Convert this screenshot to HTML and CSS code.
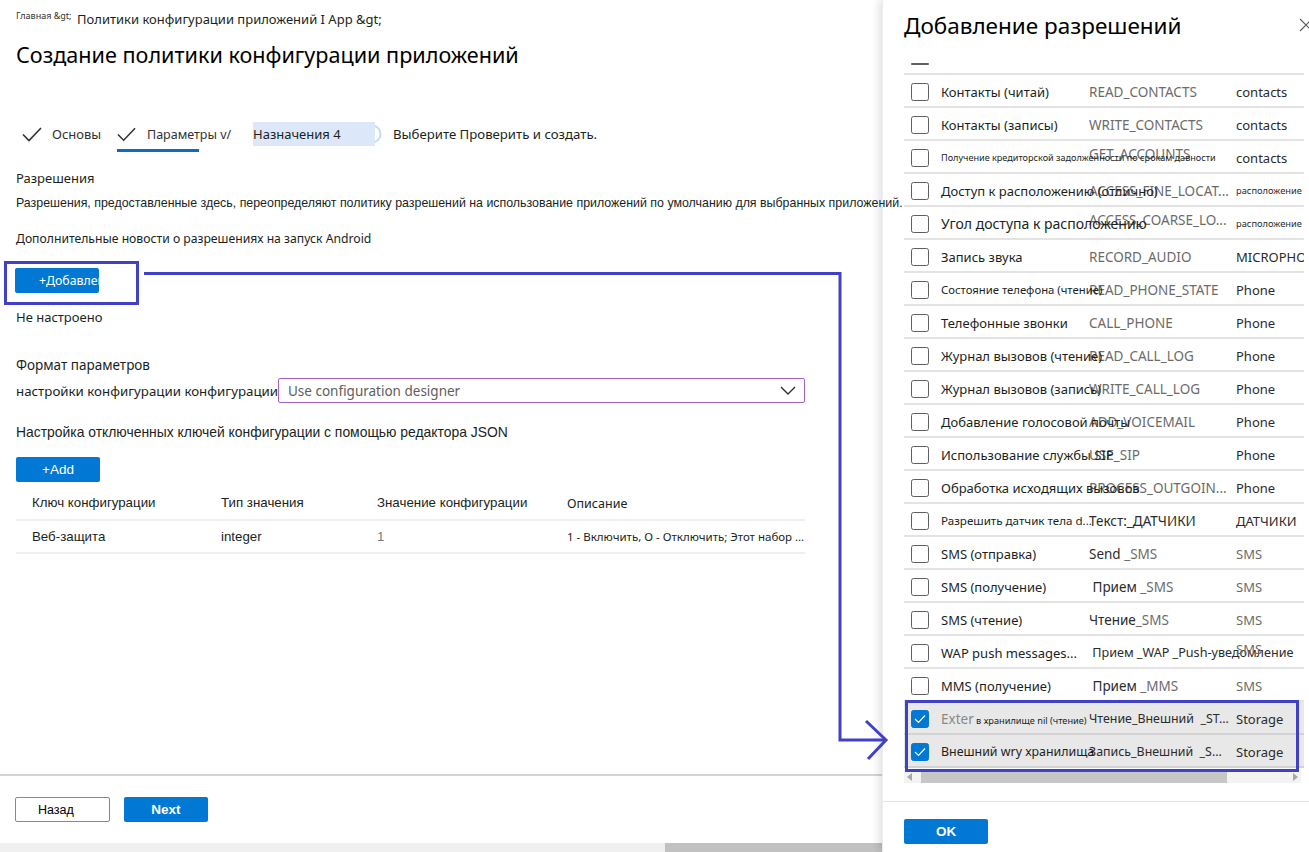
FILE: index.html
```html
<!DOCTYPE html>
<html lang="ru">
<head>
<meta charset="utf-8">
<title>Создание политики конфигурации приложений</title>
<link rel="stylesheet" href="styles.css">
</head>
<body>
<div class="main">
  <div class="crumbs"><span class="crumb-home">Главная &amp;gt;</span><span class="crumb">Политики конфигурации приложений I App &amp;gt;</span></div>
  <h1 class="title">Создание политики конфигурации приложений</h1>
  <nav class="steps">
    <div class="step step-1"><svg class="check" viewBox="0 0 20 15" width="20" height="15"><polyline points="1,7.5 7,13.5 19,1"/></svg><span>Основы</span></div>
    <div class="step step-2"><svg class="check" viewBox="0 0 20 15" width="19" height="15"><polyline points="1,7.5 7,13.5 19,1"/></svg><span>Параметры v/</span></div>
    <div class="step step-3"><svg class="ring" viewBox="0 0 20 20" width="20" height="20"><circle cx="10" cy="10" r="8.5"/></svg><span class="step-hl">Назначения 4</span></div>
    <div class="step step-4">Выберите Проверить и создать.</div>
  </nav>

  <div class="perm-title">Разрешения</div>
  <div class="desc">Разрешения, предоставленные здесь, переопределяют политику разрешений на использование приложений по умолчанию для выбранных приложений.</div>
  <div class="extra">Дополнительные новости о разрешениях на запуск Android</div>
  <button class="btn btn-primary btn-perm">+Добавление</button>
  <div class="not-config">Не настроено</div>
  <div class="format">Формат параметров</div>
  <div class="config-row">
    <span class="config-label">настройки конфигурации конфигурации</span>
    <div class="select"><span>Use configuration designer</span><svg class="chev" viewBox="0 0 16 9" width="16" height="9"><polyline points="1,1 8,8 15,1"/></svg></div>
  </div>
  <div class="json-label">Настройка отключенных ключей конфигурации с помощью редактора JSON</div>
  <button class="btn btn-primary btn-add">+Add</button>
  <div class="cfg-table">
    <div class="cfg-head">
      <span class="c1">Ключ конфигурации</span><span>Тип значения</span><span>Значение конфигурации</span><span class="c4h">Описание</span>
    </div>
    <div class="cfg-row">
      <span class="c1">Веб-защита</span><span>integer</span><span class="muted">1</span><span class="c4">1 - Включить, О - Отключить; Этот набор параметров</span>
    </div>
  </div>
</div>

<footer class="footer">
  <button class="btn btn-back">Назад</button>
  <button class="btn btn-primary btn-next">Next</button>
</footer>
<div class="page-scroll"><span class="ps-track"></span><span class="ps-thumb"></span></div>

<aside class="panel">
  <div class="panel-head">
    <h2 class="panel-title">Добавление разрешений</h2>
    <svg class="close" viewBox="0 0 14 14" width="14" height="14"><path d="M1 1 L13 13 M13 1 L1 13"/></svg>
  </div>
  <div class="perm-list">
    <div class="stub"><span class="stub-dash"></span></div>
    <div class="prow"><span class="cb"></span><span class="pname">Контакты (читай)</span><span class="pcode">READ_CONTACTS</span><span class="pgroup">contacts</span></div>
    <div class="prow"><span class="cb"></span><span class="pname">Контакты (записы)</span><span class="pcode">WRITE_CONTACTS</span><span class="pgroup">contacts</span></div>
    <div class="prow"><span class="cb"></span><span class="pname xs">Получение кредиторской задолженности по срокам давности</span><span class="pcode up">GET_ACCOUNTS</span><span class="pgroup">contacts</span></div>
    <div class="prow"><span class="cb"></span><span class="pname">Доступ к расположению (отлично)</span><span class="pcode">ACCESS_FINE_LOCAT...</span><span class="pgroup sm">расположение</span></div>
    <div class="prow"><span class="cb"></span><span class="pname lg">Угол доступа к расположению</span><span class="pcode up">ACCESS_COARSE_LO...</span><span class="pgroup sm">расположение</span></div>
    <div class="prow"><span class="cb"></span><span class="pname">Запись звука</span><span class="pcode">RECORD_AUDIO</span><span class="pgroup">MICROPHONE</span></div>
    <div class="prow"><span class="cb"></span><span class="pname s">Состояние телефона (чтение)</span><span class="pcode">READ_PHONE_STATE</span><span class="pgroup">Phone</span></div>
    <div class="prow"><span class="cb"></span><span class="pname">Телефонные звонки</span><span class="pcode">CALL_PHONE</span><span class="pgroup">Phone</span></div>
    <div class="prow"><span class="cb"></span><span class="pname">Журнал вызовов (чтение)</span><span class="pcode">READ_CALL_LOG</span><span class="pgroup">Phone</span></div>
    <div class="prow"><span class="cb"></span><span class="pname">Журнал вызовов (запись)</span><span class="pcode">WRITE_CALL_LOG</span><span class="pgroup">Phone</span></div>
    <div class="prow"><span class="cb"></span><span class="pname">Добавление голосовой почты</span><span class="pcode">ADD_VOICEMAIL</span><span class="pgroup">Phone</span></div>
    <div class="prow"><span class="cb"></span><span class="pname">Использование службы SIP</span><span class="pcode">USE_SIP</span><span class="pgroup">Phone</span></div>
    <div class="prow"><span class="cb"></span><span class="pname">Обработка исходящих вызовов</span><span class="pcode">PROCESS_OUTGOIN...</span><span class="pgroup">Phone</span></div>
    <div class="prow"><span class="cb"></span><span class="pname s2">Разрешить датчик тела d...</span><span class="pcode dark">Текст:_ДАТЧИКИ</span><span class="pgroup">ДАТЧИКИ</span></div>
    <div class="prow"><span class="cb"></span><span class="pname">SMS (отправка)</span><span class="pcode"><span class="dk">Send</span> _SMS</span><span class="pgroup muted">SMS</span></div>
    <div class="prow"><span class="cb"></span><span class="pname">SMS (получение)</span><span class="pcode"><span class="dk">&nbsp;Прием</span> _SMS</span><span class="pgroup muted">SMS</span></div>
    <div class="prow"><span class="cb"></span><span class="pname">SMS (чтение)</span><span class="pcode"><span class="dk">Чтение</span>_SMS</span><span class="pgroup muted">SMS</span></div>
    <div class="prow"><span class="cb"></span><span class="pname">WAP push messages...</span><span class="pcode wap"><span class="dk">&nbsp;Прием _WAP _Push-уведомление</span></span><span class="pgroup muted up">SMS</span></div>
    <div class="prow"><span class="cb"></span><span class="pname">MMS (получение)</span><span class="pcode"><span class="dk">&nbsp;Прием</span> _MMS</span><span class="pgroup muted">SMS</span></div>
    <div class="prow sel"><span class="cb on"><svg viewBox="0 0 12 10" width="12" height="10"><polyline points="1,5 4.5,8.5 11,1.5"/></svg></span><span class="pname"><span class="ghost">Exter</span><span class="tiny"> в хранилище nil (чтение)</span></span><span class="pcode dark st">Чтение_Внешний &nbsp;_ST...</span><span class="pgroup">Storage</span></div>
    <div class="prow sel"><span class="cb on"><svg viewBox="0 0 12 10" width="12" height="10"><polyline points="1,5 4.5,8.5 11,1.5"/></svg></span><span class="pname s3">Внешний wry хранилища</span><span class="pcode dark st">Запись_Внешний &nbsp;_S...</span><span class="pgroup">Storage</span></div>
  </div>
  <div class="hscroll">
    <svg class="arr" viewBox="0 0 6 8" width="6" height="8"><polygon points="5,0 5,8 0,4"/></svg>
    <span class="hs-thumb"></span>
    <svg class="arr arr-r" viewBox="0 0 6 8" width="6" height="8"><polygon points="1,0 1,8 6,4"/></svg>
  </div>
  <div class="panel-foot">
    <button class="btn btn-primary btn-ok">OK</button>
  </div>
</aside>

<svg class="callout" viewBox="0 0 1309 852" width="1309" height="852">
  <rect x="5.5" y="262.5" width="132" height="41"/>
  <path d="M144 273.5 H840 V740 H884"/>
  <path d="M866 721 L886 740 L868 759"/>
  <rect x="906.5" y="701.5" width="391" height="69"/>
</svg>
</body>
</html>
```

FILE: styles.css
```css
* { box-sizing: border-box; }
html, body { margin: 0; padding: 0; }
body {
  width: 1309px;
  height: 852px;
  overflow: hidden;
  position: relative;
  background: #fff;
  color: #201f1e;
  font-family: "Noto Sans", "Liberation Sans", sans-serif;
  font-size: 13px;
}

.main {
  height: 774px;
  padding-left: 16px;
}

/* breadcrumb */
.crumbs {
  height: 38px;
  padding-top: 9px;
  display: flex;
  align-items: flex-start;
}
.crumb-home {
  font-size: 9px;
  line-height: 14px;
  width: 61px;
  color: #323130;
}
.crumb {
  font-size: 13px;
  line-height: 20px;
  color: #201f1e;
}

.title {
  margin: 0;
  font-size: 21.6px;
  font-weight: 400;
  line-height: 34px;
  color: #000;
}

/* steps */
.steps {
  margin-top: 44px;
  height: 36px;
  display: flex;
  align-items: center;
  font-size: 13px;
  color: #323130;
}
.step { display: flex; align-items: center; height: 100%; }
.check { fill: none; stroke: #323130; stroke-width: 1.6; }
.step-1 { width: 101px; padding-left: 6px; }
.step-1 .check { margin-right: 10px; }
.step-2 { width: 136px; position: relative; font-size: 12.5px; }
.step-2 .check { margin-right: 11px; }
.step-2::after {
  content: "";
  position: absolute;
  left: 0;
  bottom: 0;
  width: 82px;
  height: 3px;
  background: #0f6cbd;
}
.step-3 { width: 140px; position: relative; }
.step-hl {
  position: relative;
  order: -1;
  display: inline-block;
  width: 122px;
  height: 24px;
  line-height: 24px;
  background: #dce8fa;
  color: #201f1e;
}
.ring {
  fill: none;
  stroke: #c9dcf4;
  stroke-width: 2;
  margin-left: -13px;
}
.step-4 { color: #201f1e; font-size: 13.2px; }

/* content */
.perm-title {
  margin-top: 16px;
  height: 20px;
  line-height: 20px;
  font-size: 13px;
  color: #201f1e;
}
.desc {
  position: relative;
  z-index: 3;
  margin-top: 5px;
  height: 20px;
  line-height: 20px;
  font-family: "Liberation Sans", sans-serif;
  font-size: 12.4px;
  white-space: nowrap;
  color: #201f1e;
}
.extra {
  margin-top: 16px;
  height: 20px;
  line-height: 20px;
  font-size: 12.2px;
  color: #201f1e;
}

.btn {
  display: block;
  border: none;
  border-radius: 2px;
  padding: 0;
  height: 25px;
  font-family: inherit;
  font-size: 13px;
}
.btn-primary { background: #0078d4; color: #fff; }
.btn-perm {
  margin-top: 19px;
  margin-left: -1px;
  width: 84px;
  overflow: hidden;
  white-space: nowrap;
  text-align: left;
  padding-left: 24px;
  font-size: 12.3px;
}
.not-config {
  margin-top: 14px;
  height: 20px;
  line-height: 20px;
  color: #201f1e;
}
.format {
  margin-top: 28px;
  height: 20px;
  line-height: 20px;
  font-size: 13.5px;
}
.config-row {
  margin-top: 3px;
  height: 25px;
  display: flex;
  align-items: center;
}
.config-label {
  width: 262px;
  font-size: 13.3px;
  white-space: nowrap;
}
.select {
  width: 527px;
  height: 25px;
  border: 1.5px solid #a262c9;
  border-radius: 2px;
  display: flex;
  align-items: center;
  justify-content: space-between;
  padding: 0 8px 0 9px;
  color: #605e5c;
  font-size: 13.5px;
}
.chev { fill: none; stroke: #323130; stroke-width: 1.4; }

.json-label {
  margin-top: 19px;
  height: 20px;
  line-height: 20px;
  font-family: "Liberation Sans", sans-serif;
  font-size: 13.9px;
  color: #201f1e;
  white-space: nowrap;
}
.btn-add {
  margin-top: 15px;
  width: 84px;
  font-family: "Liberation Sans", sans-serif;
  font-size: 13.5px;
}

.cfg-table {
  margin-top: 3px;
  width: 789px;
}
.cfg-head, .cfg-row {
  display: grid;
  grid-template-columns: 205px 156px 190px 238px;
  align-items: center;
  border-bottom: 2px solid #efefef;
  font-family: "Liberation Sans", sans-serif;
  font-size: 13.3px;
  color: #201f1e;
  white-space: nowrap;
}
.cfg-head { height: 36px; }
.cfg-row { height: 33px; }
.c1 { padding-left: 16px; }
.c4h { font-family: "Noto Sans", sans-serif; font-size: 12.5px; padding-top: 2px; }
.c4 { overflow: hidden; text-overflow: ellipsis; font-size: 11.5px; font-family: "Noto Sans", sans-serif; }
.muted { color: #7a7876; }

/* footer */
.footer {
  height: 69px;
  border-top: 2px solid #d4d4d4;
  padding: 21px 0 0 15px;
  display: flex;
  align-items: flex-start;
  gap: 14px;
}
.btn-back {
  width: 95px;
  background: #fff;
  border: 1px solid #8a8886;
  color: #000;
  text-align: left;
  padding-left: 22px;
  font-family: "Liberation Sans", sans-serif;
  font-size: 12.5px;
}
.btn-next {
  width: 84px;
  font-weight: 700;
  font-family: "Liberation Sans", sans-serif;
  font-size: 13.5px;
}
.page-scroll {
  display: flex;
  width: 882px;
  height: 9px;
}
.ps-track { width: 665px; background: #f0f0f0; }
.ps-thumb { flex: 1; background: #c1c1c1; }

/* side panel */
.panel {
  position: absolute;
  top: 0;
  left: 882px;
  width: 427px;
  height: 852px;
  z-index: 2;
  background: #fff;
  box-shadow: -3px 0 8px rgba(0, 0, 0, 0.12);
  border-left: 1px solid #ececec;
}
.panel-head {
  height: 58px;
  padding: 9px 0 0 21px;
  position: relative;
}
.panel-title {
  margin: 0;
  font-size: 22.5px;
  font-weight: 400;
  line-height: 34px;
  color: #000;
}
.close {
  position: absolute;
  right: -4px;
  top: 18px;
  fill: none;
  stroke: #605e5c;
  stroke-width: 1.2;
}
.perm-list {
  margin-left: 21px;
  width: 400px;
  overflow: hidden;
}
.stub {
  height: 17px;
  border-bottom: 2px solid #e3e3e3;
  padding: 5px 0 0 7px;
}
.stub-dash {
  display: block;
  width: 18px;
  height: 2px;
  background: #5f5f5f;
  border-radius: 1px;
}
.prow {
  height: 33px;
  border-bottom: 2px solid #e3e3e3;
  display: grid;
  grid-template-columns: 37px 148px 147px 68px;
  align-items: center;
  padding-top: 2px;
  white-space: nowrap;
  font-size: 13px;
  color: #201f1e;
}
.prow.sel { background: #e8e8e8; border-bottom-color: #d2d2d2; }
.cb {
  margin-left: 7px;
  width: 18px;
  height: 18px;
  border: 1.6px solid #5f5f5f;
  border-radius: 2.5px;
  display: flex;
  align-items: center;
  justify-content: center;
}
.cb.on { background: #0078d4; border-color: #0078d4; }
.cb svg { fill: none; stroke: #fff; stroke-width: 1.2; }
.pname { position: relative; z-index: 1; }
.pname.xs { font-size: 9.1px; }
.pname.s { font-size: 11.3px; }
.pname.s2 { font-size: 11.6px; }
.pname.s3 { font-size: 12.4px; }
.pname.lg { font-size: 14px; }
.pcode { color: #6b6b6b; font-size: 13.5px; }
.pcode.up, .pgroup.up { margin-top: -8px; }
.pcode.dark, .pcode .dk { color: #2b2b2b; }
.pcode.st { font-size: 12.4px; }
.pcode.wap { font-size: 12.6px; overflow: visible; }
.pgroup { font-size: 13px; color: #2b2b2b; }
.pgroup.sm { font-size: 9.3px; }
.pgroup.muted { color: #6b6b6b; }
.ghost { color: #8a8886; font-size: 13.5px; }
.tiny { font-size: 9.2px; }

.hscroll {
  margin: 2px 0 0 21px;
  width: 397px;
  height: 13px;
  display: flex;
  align-items: center;
  background: #f3f3f3;
}
.arr { fill: #a6a6a6; margin-left: 3px; }
.arr-r { margin-left: auto; margin-right: 3px; }
.hs-thumb {
  margin-left: 8px;
  width: 306px;
  height: 13px;
  background: #c6c6c6;
}
.panel-foot {
  margin-top: 18px;
  border-top: 1px solid #e4e4e4;
  padding: 17px 0 0 21px;
}
.btn-ok {
  width: 84px;
  font-weight: 700;
  font-family: "Liberation Sans", sans-serif;
  font-size: 13.5px;
}

/* annotation overlay */
.callout {
  position: absolute;
  top: 0;
  left: 0;
  z-index: 5;
  pointer-events: none;
  fill: none;
  stroke: #4141c6;
  stroke-width: 3;
}
```
